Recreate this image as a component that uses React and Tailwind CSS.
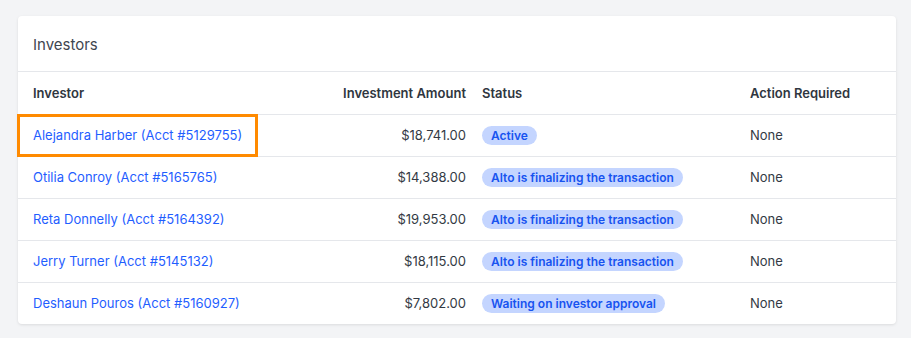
const investors = [
  { name: 'Alejandra Harber', acct: '5129755', amount: '$18,741.00', status: 'Active', focused: true },
  { name: 'Otilia Conroy', acct: '5165765', amount: '$14,388.00', status: 'Alto is finalizing the transaction' },
  { name: 'Reta Donnelly', acct: '5164392', amount: '$19,953.00', status: 'Alto is finalizing the transaction' },
  { name: 'Jerry Turner', acct: '5145132', amount: '$18,115.00', status: 'Alto is finalizing the transaction' },
  { name: 'Deshaun Pouros', acct: '5160927', amount: '$7,802.00', status: 'Waiting on investor approval' },
]

const COLS = 'grid grid-cols-[239px_217px_268px_1fr]'

export default function App() {
  return (
    <div
      className="min-h-[338px] bg-[#f3f4f6] px-[18px] pt-4 text-[13px] text-[#333a44]"
      style={{ fontFamily: 'Inter, "Noto Sans", sans-serif' }}
    >
      <div className="w-[878px] rounded-[4px] bg-white shadow-[0_1px_3px_rgba(0,0,0,0.1)]">
        <div className="flex h-14 items-center border-b border-[#e5e7eb] px-[15px] pt-[3px] text-[15px] text-[#3f4650]">
          Investors
        </div>
        <div className={`${COLS} h-[42px] items-center pt-px font-semibold text-[#2f3640]`}>
          <div className="pl-[15px]">Investor</div>
          <div className="pr-2 text-right">Investment Amount</div>
          <div className="pl-2">Status</div>
          <div className="pl-2">Action Required</div>
        </div>
        {investors.map((inv) => (
          <div key={inv.acct} className={`${COLS} h-[42px] items-center border-t border-[#e5e7eb]`}>
            <div
              className={[
                'flex h-full items-center pl-[15px]',
                inv.focused ? 'outline outline-[3px] -outline-offset-2 outline-[#ff8a00]' : '',
              ].join(' ')}
            >
              <a href="#" className="text-[#1f5eff]">
                {inv.name} (Acct #{inv.acct})
              </a>
            </div>
            <div className="pr-2 text-right">{inv.amount}</div>
            <div className="pl-2">
              <span className="inline-flex h-[19px] items-center rounded-full bg-[#c4d5ff] px-[9px] text-[12px] font-semibold text-[#1753f0]">
                {inv.status}
              </span>
            </div>
            <div className="pl-2">None</div>
          </div>
        ))}
      </div>
    </div>
  )
}
